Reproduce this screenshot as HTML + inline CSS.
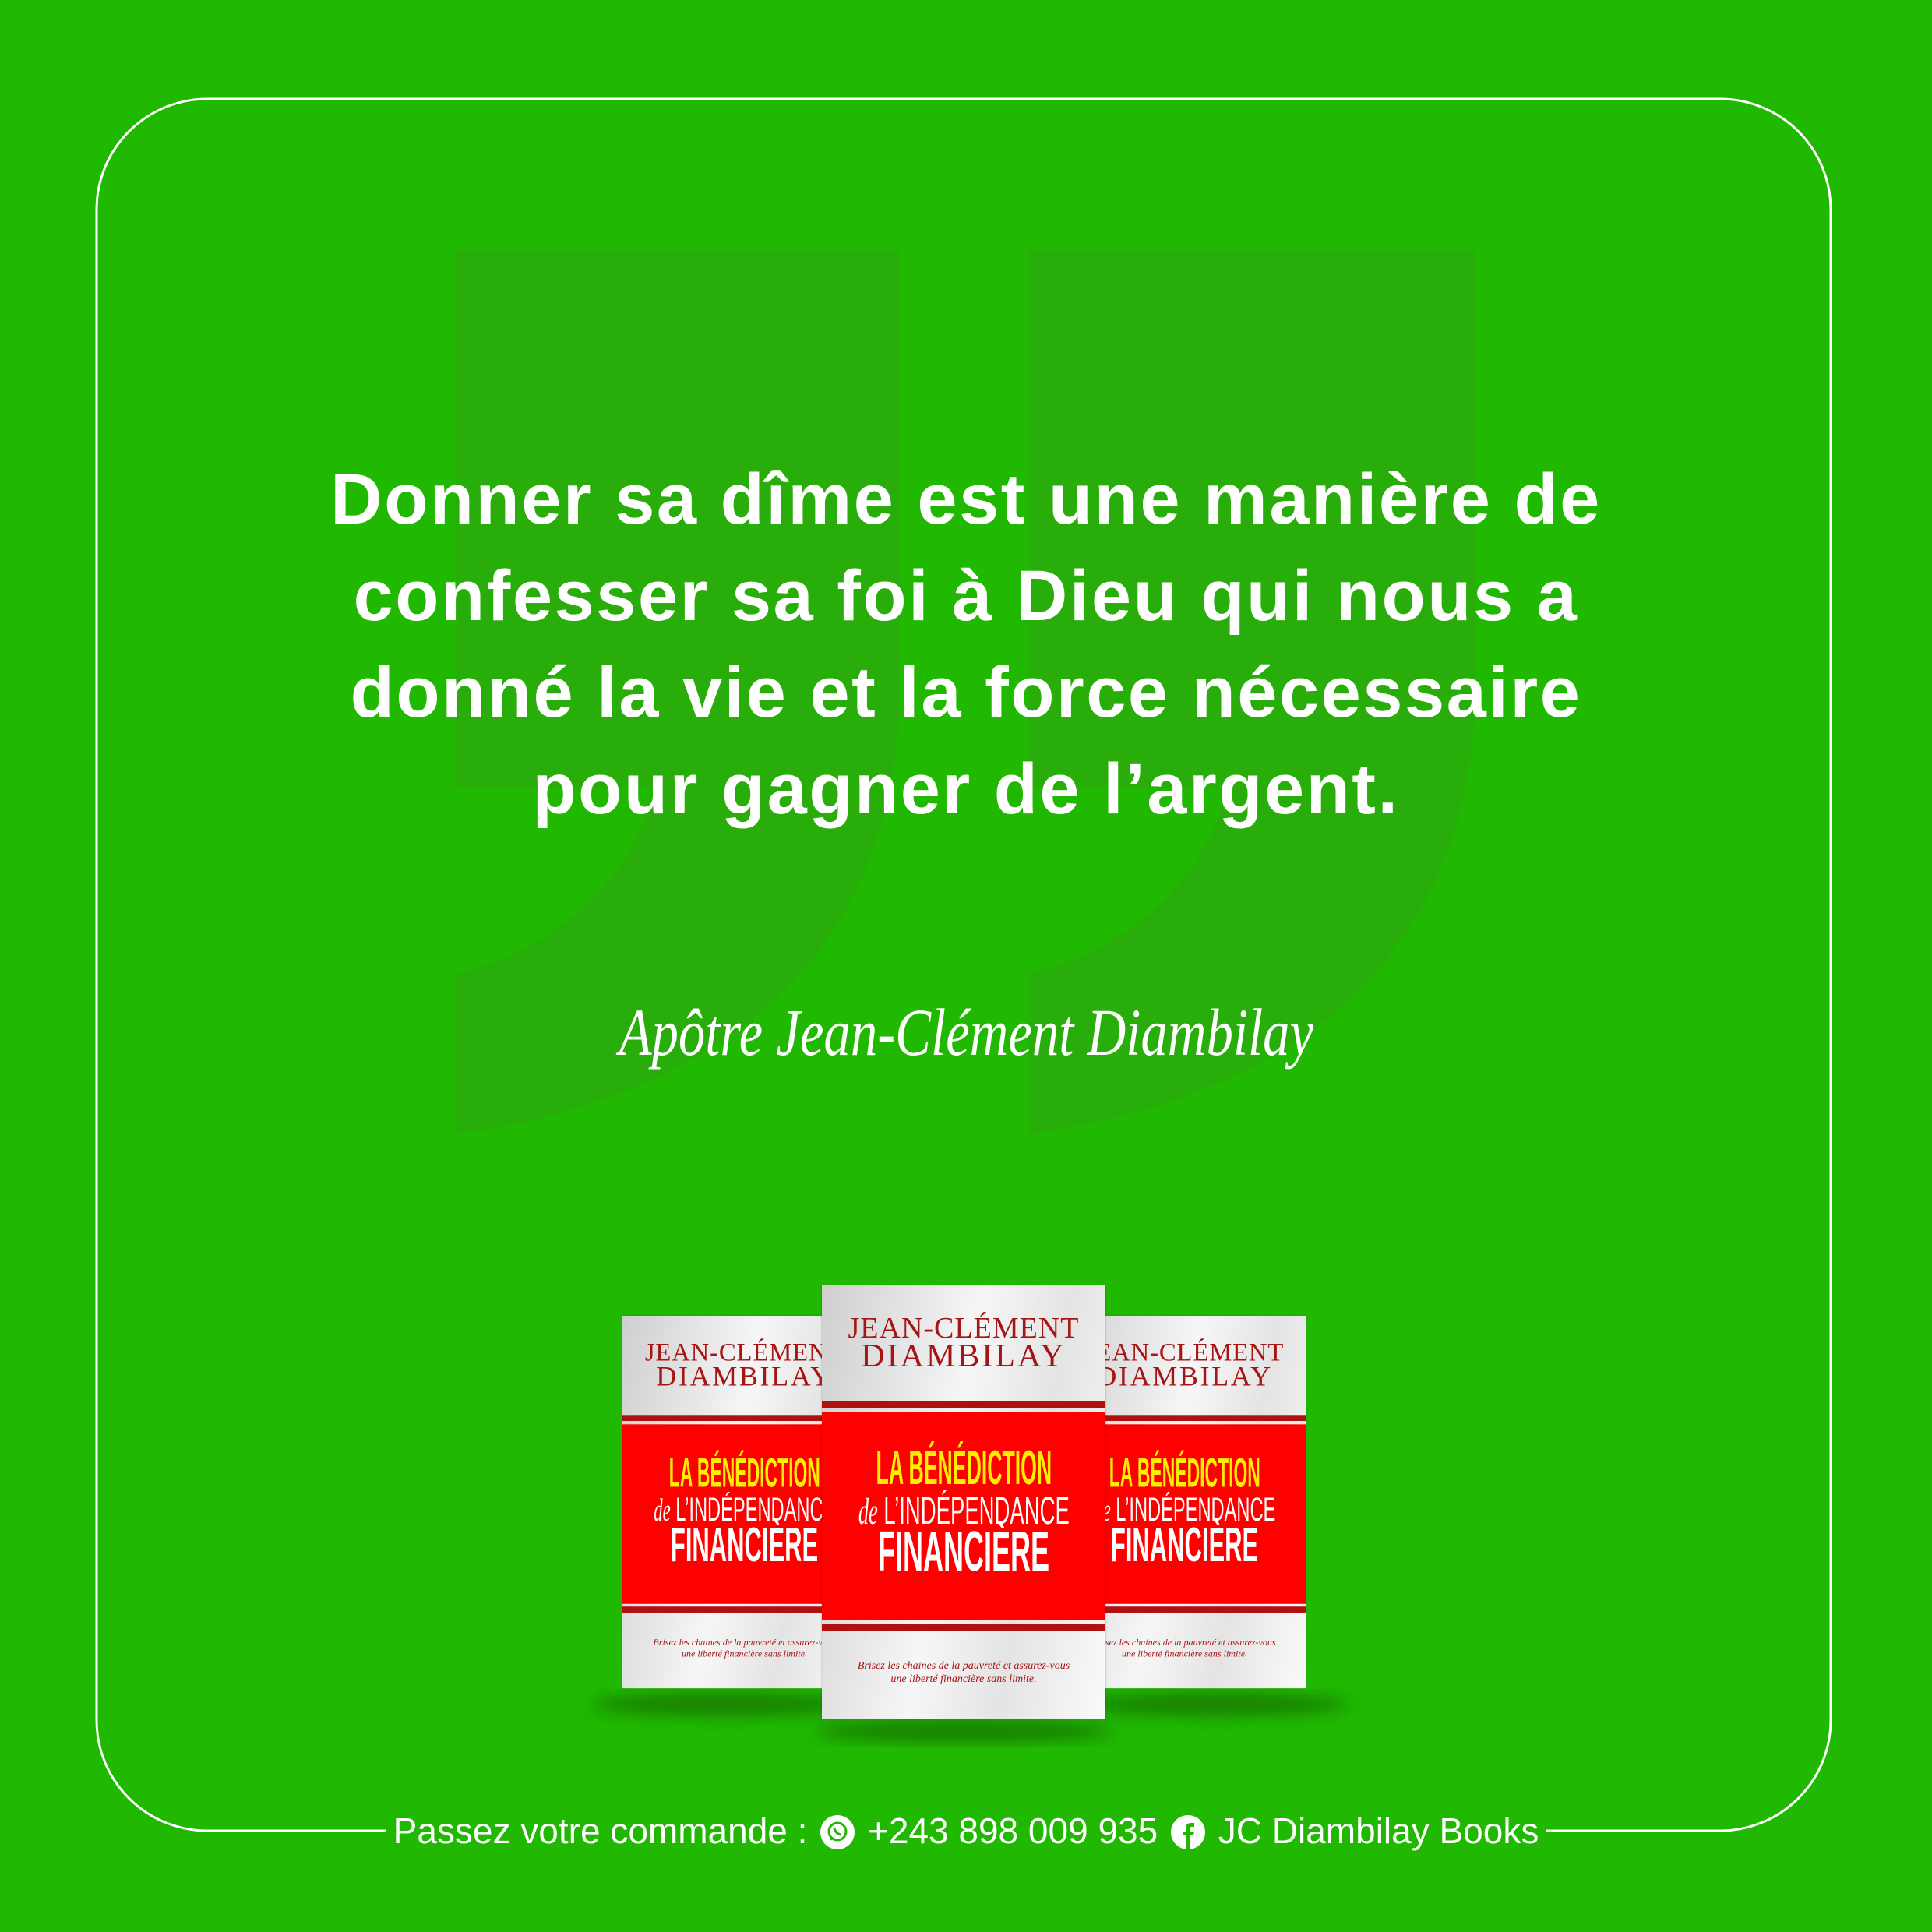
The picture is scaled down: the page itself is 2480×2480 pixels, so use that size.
<!DOCTYPE html>
<html><head><meta charset="utf-8"><style>
*{margin:0;padding:0;box-sizing:border-box}
body{width:2480px;height:2480px;background:#20b800;position:relative;overflow:hidden;font-family:"Liberation Sans",sans-serif}
.abs{position:absolute}
.quote{position:absolute;left:0;top:579px;width:2480px;text-align:center;color:#fff;font-weight:bold;font-size:92px;letter-spacing:2.5px;line-height:124px}
.sig{position:absolute;left:0;top:1275px;width:2480px;text-align:center;color:#fff}
.sig span{display:inline-block;font-family:"Liberation Serif",serif;font-style:italic;font-size:86px;transform:scaleX(0.8)}
.book{position:absolute;width:364px;height:556px;background:linear-gradient(100deg,#cfcfcf,#f6f6f6 45%,#e4e4e4 70%,#fafafa);overflow:hidden;box-shadow:0 0 2px rgba(0,0,0,.3)}
.book .a1{position:absolute;top:36px;width:100%;text-align:center;font-family:"Liberation Serif",serif;color:#a51515;font-size:38px;line-height:38px;letter-spacing:1px;white-space:nowrap}
.book .a2{position:absolute;top:70px;width:100%;text-align:center;font-family:"Liberation Serif",serif;color:#a51515;font-size:42px;line-height:42px;letter-spacing:3px;white-space:nowrap}
.book .bar1{position:absolute;top:148px;height:9px;width:100%;background:#b01010}
.book .red{position:absolute;top:162px;height:268px;width:100%;background:#ff0000}
.book .bar2{position:absolute;top:434px;height:9px;width:100%;background:#b01010}
.book .t{position:absolute;left:-200px;width:764px;text-align:center;white-space:nowrap}
.book .t span{display:inline-block}
.book .t1{top:42px;font-weight:bold;color:#ffee00;font-size:62px;line-height:62px}
.book .t1 span{transform:scaleX(0.43)}
.book .t2{top:102px;color:#fff;font-size:50px;line-height:50px}
.book .t2 span{transform:scaleX(0.55)}
.book .t2 i{font-family:"Liberation Serif",serif;font-size:48px}
.book .t3{top:144px;font-weight:bold;color:#fff;font-size:72px;line-height:72px}
.book .t3 span{transform:scaleX(0.5)}
.book .tg{position:absolute;top:480px;width:100%;text-align:center;font-family:"Liberation Serif",serif;font-style:italic;color:#a51515;font-size:14px;line-height:17px;white-space:nowrap}
.foot{position:absolute;left:0;top:2322px;width:2480px;text-align:center;height:56px}
.foot .in{display:inline-block;background:#20b800;padding:0 10px;color:#fff;font-size:46px;line-height:56px;white-space:nowrap}
.ic{display:inline-block;width:44px;height:44px;border-radius:50%;background:#fff;vertical-align:-8px;position:relative;margin:0 4px}
</style></head><body>
<svg class="abs" style="left:0;top:0" width="2480" height="2480" viewBox="0 0 2480 2480">
<defs><filter id="b"><feGaussianBlur stdDeviation="10"/></filter></defs>
<g transform="scale(1.5816)" fill="#28ad0b">
<path d="M370 203H730V560C730 760 600 890 370 920V790C460 770 520 700 530 640H370Z"/>
<path d="M835 203H1197V560C1197 760 1065 890 835 920V790C925 770 985 700 995 640H835Z"/>
</g>
<rect x="124" y="127" width="2226" height="2223" rx="142" ry="142" fill="none" stroke="#fff" stroke-width="3"/>
<g filter="url(#b)" fill="#156a03" opacity=".75">
<ellipse cx="930" cy="2188" rx="170" ry="14"/>
<ellipse cx="1560" cy="2188" rx="170" ry="14"/>
<ellipse cx="1238" cy="2222" rx="190" ry="14"/>
</g>
</svg>

<div class="quote">Donner sa dîme est une manière de<br>confesser sa foi à Dieu qui nous a<br>donné la vie et la force nécessaire<br>pour gagner de l’argent.</div>
<div class="sig"><span>Apôtre Jean-Clément Diambilay</span></div>

<div class="book" style="left:799px;top:1689px;transform:scale(0.86);transform-origin:0 0">
<div class="a1">JEAN-CLÉMENT</div><div class="a2">DIAMBILAY</div><div class="bar1"></div>
<div class="red"><div class="t t1"><span>LA BÉNÉDICTION</span></div><div class="t t2"><span><i>de</i> L’INDÉPENDANCE</span></div><div class="t t3"><span>FINANCIÈRE</span></div></div>
<div class="bar2"></div><div class="tg">Brisez les chaines de la pauvreté et assurez-vous<br>une liberté financière sans limite.</div></div>

<div class="book" style="left:1364px;top:1689px;transform:scale(0.86);transform-origin:0 0">
<div class="a1">JEAN-CLÉMENT</div><div class="a2">DIAMBILAY</div><div class="bar1"></div>
<div class="red"><div class="t t1"><span>LA BÉNÉDICTION</span></div><div class="t t2"><span><i>de</i> L’INDÉPENDANCE</span></div><div class="t t3"><span>FINANCIÈRE</span></div></div>
<div class="bar2"></div><div class="tg">Brisez les chaines de la pauvreté et assurez-vous<br>une liberté financière sans limite.</div></div>

<div class="book" style="left:1055px;top:1650px">
<div class="a1">JEAN-CLÉMENT</div><div class="a2">DIAMBILAY</div><div class="bar1"></div>
<div class="red"><div class="t t1"><span>LA BÉNÉDICTION</span></div><div class="t t2"><span><i>de</i> L’INDÉPENDANCE</span></div><div class="t t3"><span>FINANCIÈRE</span></div></div>
<div class="bar2"></div><div class="tg">Brisez les chaines de la pauvreté et assurez-vous<br>une liberté financière sans limite.</div></div>

<div class="foot"><div class="in">Passez votre commande : <span class="ic"><svg width="44" height="44" viewBox="0 0 44 44"><circle cx="22" cy="21" r="11" fill="none" stroke="#20b800" stroke-width="3"/><path d="M12 33l2-6 5 3z" fill="#20b800"/><path d="M18 17c1 4 4 7 8 8" stroke="#20b800" stroke-width="3" fill="none"/></svg></span> +243 898 009 935 <span class="ic"><svg width="44" height="44" viewBox="0 0 44 44"><path d="M24 44V26h5l1-5h-6v-3c0-2 1-3 3-3h3v-5h-4c-5 0-7 3-7 7v4h-4v5h4v18z" fill="#20b800"/></svg></span> JC Diambilay Books</div></div>
</body></html>
